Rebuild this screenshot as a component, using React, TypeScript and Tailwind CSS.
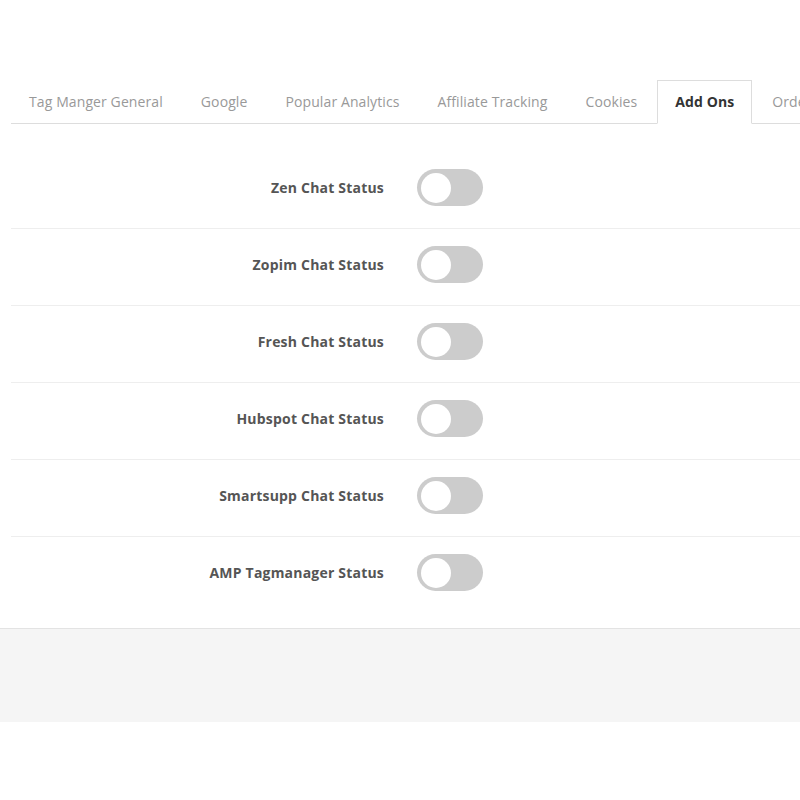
const tabs = [
  "Tag Manger General",
  "Google",
  "Popular Analytics",
  "Affiliate Tracking",
  "Cookies",
  "Add Ons",
  "Order Tracking",
];

const addOns = [
  "Zen Chat Status",
  "Zopim Chat Status",
  "Fresh Chat Status",
  "Hubspot Chat Status",
  "Smartsupp Chat Status",
  "AMP Tagmanager Status",
];

function Toggle() {
  return (
    <button
      type="button"
      className="relative flex items-center w-[66px] h-[37px] rounded-full bg-[#cccccc] px-[4px] shrink-0"
    >
      <span className="block w-[30px] h-[30px] rounded-full bg-white" />
    </button>
  );
}

export default function App() {
  return (
    <div
      className="w-[800px] h-[800px] bg-white overflow-hidden"
      style={{ fontFamily: '"Open Sans", sans-serif' }}
    >
      <div className="pt-[80px]">
        {/* Tabs */}
        <div className="ml-[11px] border-b border-[#dddddd] flex whitespace-nowrap">
          {tabs.map((tab) => {
            const active = tab === "Add Ons";
            return (
              <div
                key={tab}
                className={
                  active
                    ? "mr-[2px] -mb-px px-[17px] py-[11px] text-[14px] leading-[20px] tracking-[0.1px] border border-[#dddddd] border-b-white bg-white font-bold text-[#333333] shrink-0"
                    : "mr-[2px] -mb-px px-[17px] py-[11px] text-[14px] leading-[20px] tracking-[0.1px] border border-transparent text-[#999999] shrink-0"
                }
              >
                {tab}
              </div>
            );
          })}
        </div>

        {/* Settings rows */}
        <div className="pt-[28px] pb-[15px]">
          {addOns.map((label, i) => (
            <div
              key={label}
              className={
                i < addOns.length - 1
                  ? "ml-[11px] flex items-center pt-[17px] pb-[22px] border-b border-[#eeeeee]"
                  : "ml-[11px] flex items-center pt-[17px] pb-[22px]"
              }
            >
              <div className="w-[373px] text-right text-[14px] font-bold tracking-[0.2px] text-[#555555]">
                {label}
              </div>
              <div className="ml-[33px]">
                <Toggle />
              </div>
            </div>
          ))}
        </div>

        {/* Footer */}
        <div className="h-[94px] bg-[#f5f5f5] border-t border-[#e3e3e3]" />
      </div>
    </div>
  );
}
